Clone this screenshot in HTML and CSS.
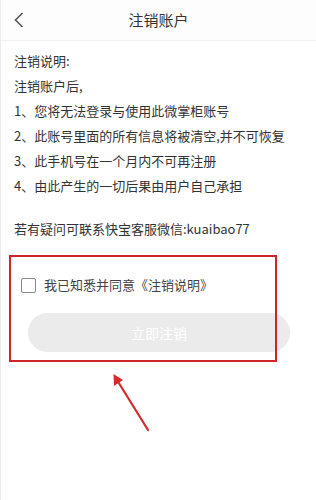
FILE: index.html
```html
<!DOCTYPE html>
<html lang="zh">
<head>
<meta charset="utf-8">
<link rel="stylesheet" href="styles.css">
</head>
<body>
<div class="page">
  <header class="bar">
    <span class="back">
      <svg width="12" height="16" viewBox="0 0 12 16"><path d="M9.5 1 L2.5 8 L9.5 15" fill="none" stroke="#555" stroke-width="1.6"/></svg>
    </span>
    <h1 class="title">注销账户</h1>
  </header>
  <main class="content">
    <p class="line">注销说明:</p>
    <p class="line">注销账户后,</p>
    <p class="line">1、您将无法登录与使用此微掌柜账号</p>
    <p class="line">2、此账号里面的所有信息将被清空,并不可恢复</p>
    <p class="line">3、此手机号在一个月内不可再注册</p>
    <p class="line">4、由此产生的一切后果由用户自己承担</p>
    <p class="line contact">若有疑问可联系快宝客服微信:kuaibao77</p>
    <label class="agree"><span class="box"></span><span>我已知悉并同意《注销说明》</span></label>
    <button class="submit">立即注销</button>
  </main>
  <div class="mark"></div>
  <svg class="arrow" width="316" height="500" viewBox="0 0 316 500">
    <line x1="147" y1="430" x2="116" y2="380" stroke="#d42a2a" stroke-width="2.2" stroke-linecap="round"/>
    <polygon points="112.5,374 113,386 122,380" fill="#d42a2a"/>
  </svg>
</div>
</body>
</html>
```
FILE: styles.css
```css
* { box-sizing: border-box; }
html, body { margin: 0; padding: 0; background: #fff; }
body { font-family: "Noto Sans CJK SC", "Noto Sans", sans-serif; color: #333; }
.page { position: relative; width: 316px; height: 500px; overflow: hidden; border-left: 1px solid #ececec; }
.bar { height: 41px; display: flex; align-items: center; justify-content: center; position: relative; background: #fdfdfd; border-bottom: 1px solid #f1f1f1; }
.back { position: absolute; left: 12px; top: 12px; display: flex; }
.title { margin: 0; font-size: 15px; font-weight: 400; color: #333; line-height: 20px; }
.content { padding: 7px 14px 0 13px; }
.line { margin: 0; font-size: 13px; line-height: 25px; color: #333; }
.contact { margin-top: 18px; }
.agree { display: flex; align-items: center; gap: 8px; margin-top: 35px; margin-left: 7px; font-size: 13px; color: #444; line-height: 18px; }
.box { width: 15px; height: 15px; border: 1.5px solid #8a8a8a; border-radius: 2px; }
.submit { display: block; margin: 19px 0 0 14px; width: 262px; height: 39px; border: none; border-radius: 20px; background: #ebebeb; color: #fff; font-family: inherit; font-size: 14px; }
.mark { position: absolute; left: 8px; top: 255px; width: 268px; height: 107px; border: 2px solid #cf2528; }
.arrow { position: absolute; left: 0; top: 0; pointer-events: none; }
```
